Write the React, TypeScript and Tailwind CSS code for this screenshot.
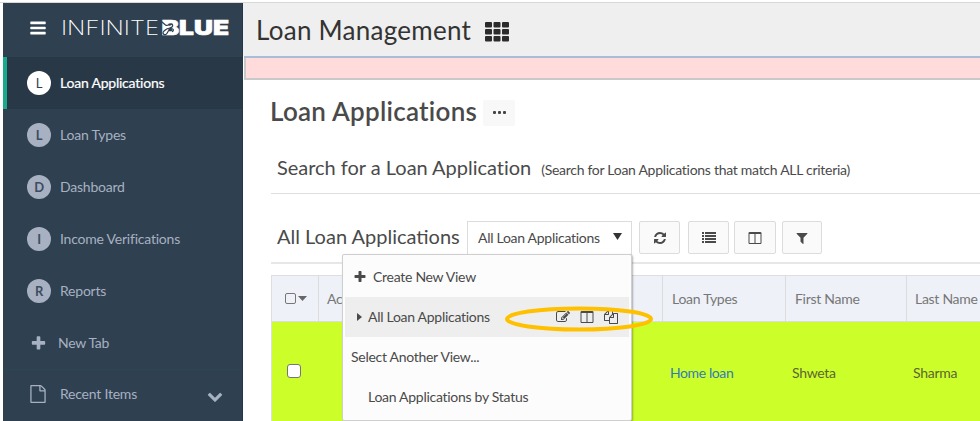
import React from "react";

const PATHS = {
  bars: "M1664 1344v128q0 26-19 45t-45 19h-1408q-26 0-45-19t-19-45v-128q0-26 19-45t45-19h1408q26 0 45 19t19 45zm0-512v128q0 26-19 45t-45 19h-1408q-26 0-45-19t-19-45v-128q0-26 19-45t45-19h1408q26 0 45 19t19 45zm0-512v128q0 26-19 45t-45 19h-1408q-26 0-45-19t-19-45v-128q0-26 19-45t45-19h1408q26 0 45 19t19 45z",
  refresh:
    "M1639 1056q0 5-1 7-64 268-268 434.5t-478 166.5q-146 0-282.5-55t-243.5-157l-129 129q-19 19-45 19t-45-19-19-45v-448q0-26 19-45t45-19h448q26 0 45 19t19 45-19 45l-137 137q71 66 161 102t187 36q134 0 250-65t186-179q11-17 53-117 8-23 30-23h192q13 0 22.5 9.5t9.5 22.5zm25-800v448q0 26-19 45t-45 19h-448q-26 0-45-19t-19-45 19-45l138-138q-148-137-349-137-134 0-250 65t-186 179q-11 17-53 117-8 23-30 23h-199q-13 0-22.5-9.5t-9.5-22.5v-7q65-268 270-434.5t480-166.5q146 0 284 55.5t245 156.5l130-129q19-19 45-19t45 19 19 45z",
  filter:
    "M1595 295q17 41-14 70l-493 493v742q0 42-39 59-13 5-25 5-27 0-45-19l-256-256q-19-19-19-45v-486l-493-493q-31-29-14-70 17-39 59-39h1280q42 0 59 39z",
  columns:
    "M224 1536h608v-1152h-640v1120q0 13 9.5 22.5t22.5 9.5zm1376-32v-1120h-640v1152h608q13 0 22.5-9.5t9.5-22.5zm128-1216v1216q0 66-47 113t-113 47h-1344q-66 0-113-47t-47-113v-1216q0-66 47-113t113-47h1344q66 0 113 47t47 113z",
  plus: "M1600 736v192q0 40-28 68t-68 28h-416v416q0 40-28 68t-68 28h-192q-40 0-68-28t-28-68v-416h-416q-40 0-68-28t-28-68v-192q0-40 28-68t68-28h416v-416q0-40 28-68t68-28h192q40 0 68 28t28 68v416h416q40 0 68 28t28 68z",
  edit: "M888 1184l116-116-152-152-116 116v56h96v96h56zm440-720q-16-16-33 1l-350 350q-17 17-1 33t33-1l350-350q17-17 1-33zm80 594v190q0 119-84.5 203.5t-203.5 84.5h-832q-119 0-203.5-84.5t-84.5-203.5v-832q0-119 84.5-203.5t203.5-84.5h832q63 0 117 25 15 7 18 23 3 17-9 29l-49 49q-14 14-32 8-23-6-45-6h-832q-66 0-113 47t-47 113v832q0 66 47 113t113 47h832q66 0 113-47t47-113v-126q0-13 9-22l64-64q15-15 35-7t20 29zm-96-738l288 288-672 672h-288v-288zm444 132l-92 92-288-288 92-92q28-28 68-28t68 28l152 152q28 28 28 68t-28 68z",
  copy: "M1696 384q40 0 68 28t28 68v1216q0 40-28 68t-68 28h-960q-40 0-68-28t-28-68v-288h-544q-40 0-68-28t-28-68v-672q0-40 20-88t48-76l408-408q28-28 76-48t88-20h416q40 0 68 28t28 68v328q68-40 128-40h416zm-544 213l-299 299h299v-299zm-640-384l-299 299h299v-299zm196 647l316-316v-416h-384v416q0 40-28 68t-68 28h-416v640h512v-256q0-40 20-88t48-76zm956 804v-1152h-384v416q0 40-28 68t-68 28h-416v640h896z",
  file: "M1596 380q28 28 48 76t20 88v1152q0 40-28 68t-68 28h-1344q-40 0-68-28t-28-68v-1600q0-40 28-68t68-28h896q40 0 88 20t76 48zm-444-244v376h376q-10-29-22-41l-313-313q-12-12-41-22zm384 1528v-1024h-416q-40 0-68-28t-28-68v-416h-768v1536h1280z",
  chevron:
    "M1683 808l-742 741q-19 19-45 19t-45-19l-742-741q-19-19-19-45.5t19-45.5l166-165q19-19 45-19t45 19l531 531 531-531q19-19 45-19t45 19l166 165q19 19 19 45.5t-19 45.5z",
};

function Icon({ name, className }: { name: keyof typeof PATHS; className: string }) {
  return (
    <svg viewBox="0 0 1792 1792" fill="currentColor" className={className}>
      <path d={PATHS[name]} />
    </svg>
  );
}

function Logo() {
  return (
    <svg width="170" height="28" viewBox="0 -4 170 28" fill="#fff" className="font-['Inter',sans-serif] tracking-normal">
      <text x="-1" y="17" fontSize="20" fontWeight="200" textLength="98" lengthAdjust="spacingAndGlyphs">
        INFINITE
      </text>
      <text x="99.500" y="17" fontSize="20" fontWeight="900" stroke="#fff" strokeWidth="0.6" textLength="67.500" lengthAdjust="spacingAndGlyphs">
        BLUE
      </text>
      <g fill="none" stroke="#2f4050" strokeWidth="1.2" strokeLinecap="round">
        <path d="M100 4l3.500 3c2 1.500 3-.5 5-1s3 1.500 1.500 3-4 1-6 2.500-4 3-2.500 4.500 3 .5 4-1.500 2-4 4-4 2.500 2 1 3" />
      </g>
    </svg>
  );
}

function NavItem({ letter, label, active }: { letter: string; label: string; active?: boolean }) {
  return (
    <div
      className={
        active
          ? "flex h-[52px] items-center border-l-4 border-[#19aa8d] bg-[#293846] pl-5 text-white"
          : "flex h-[52px] items-center pl-6 text-[#a7b1c2]"
      }
    >
      <span
        className={
          active
            ? "flex size-6 items-center justify-center rounded-full bg-white text-[13px] text-[#2f4050]"
            : "flex size-6 items-center justify-center rounded-full bg-[#a7b1c2] text-[13px] font-bold text-[#3d4d60]"
        }
      >
        {letter}
      </span>
      <span className={active ? "ml-[9px] [-webkit-text-stroke:0.2px]" : "ml-[9px]"}>{label}</span>
    </div>
  );
}

function Sidebar() {
  return (
    <aside className="h-[418px] w-[240px] shrink-0 border-r border-[#26364a] bg-[#2f4050] text-[14px] leading-5 tracking-[-0.22px]">
      <div className="flex h-[54px] items-center pl-[26px]">
        <Icon name="bars" className="mt-[-4px] size-[18px] text-white" />
        <div className="mt-[-4px] ml-[15px]">
          <Logo />
        </div>
      </div>
      <NavItem letter="L" label="Loan Applications" active />
      <NavItem letter="L" label="Loan Types" />
      <NavItem letter="D" label="Dashboard" />
      <NavItem letter="I" label="Income Verifications" />
      <NavItem letter="R" label="Reports" />
      <div className="flex h-[52px] items-center pl-[27px] text-[#a7b1c2]">
        <Icon name="plus" className="size-[17px]" />
        <span className="ml-[11px] tracking-[-0.3px]">New Tab</span>
      </div>
      <div className="flex h-[49px] items-center border-t border-[#2b4557] pl-[26px] text-[#a7b1c2]">
        <Icon name="file" className="size-[18px]" />
        <span className="mt-[-1px] ml-[13px]">Recent Items</span>
        <Icon name="chevron" className="mt-1 mr-[19px] ml-auto size-4" />
      </div>
    </aside>
  );
}

function ToolButton({ className, children }: { className: string; children: React.ReactNode }) {
  return (
    <button className={`flex h-[33px] items-center justify-center rounded-[2px] border border-[#dcdcdc] bg-[#fafafa] text-[#4a4a4a] ${className}`}>
      {children}
    </button>
  );
}

function ViewMenu() {
  return (
    <div className="absolute top-[32px] left-[-126px] z-10 h-[167px] w-[290px] rounded-[2px] border border-[#cfcfcf] bg-[#fcfcfc] px-[2px] pt-[2px] shadow-[1px_1px_2px_rgba(0,0,0,0.3)]">
      <div className="flex h-[40px] items-center pl-2">
        <Icon name="plus" className="size-[14px]" />
        <span className="ml-[6px]">Create New View</span>
      </div>
      <div className="flex h-[40px] items-center bg-[#eeeeee] pl-[12px]">
        <svg width="5" height="8" viewBox="0 0 5 8" fill="currentColor">
          <path d="M0 0l5 4-5 4z" />
        </svg>
        <span className="ml-[6px]">All Loan Applications</span>
        <div className="mr-[11px] ml-auto flex gap-[10px]">
          <Icon name="edit" className="size-[14px]" />
          <Icon name="columns" className="size-[14px]" />
          <Icon name="copy" className="size-[14px]" />
        </div>
      </div>
      <div className="flex h-[40px] items-center pl-[6px]">Select Another View...</div>
      <div className="flex h-[40px] items-center pl-[23px]">Loan Applications by Status</div>
      <svg className="absolute top-[49px] left-[160px] max-w-none" width="152" height="30" viewBox="0 0 152 30">
        <ellipse cx="76" cy="15" rx="72" ry="10.5" fill="none" stroke="#ffc000" strokeWidth="4" />
      </svg>
    </div>
  );
}

function DataTable() {
  return (
    <div className="mt-[11px] ml-[28px] w-[709px] overflow-hidden border-t border-l border-[#dedede]">
      <div className="flex h-[46px] border-b border-[#dcdcdc] bg-[#eef1f7] leading-[45px] text-[#777777]">
        <div className="flex w-[47px] shrink-0 items-center border-r border-[#dcdcdc] pl-[13px]">
          <span className="size-[11px] rounded-[2px] border border-[#777777]" />
          <svg className="ml-[2px]" width="9" height="5" fill="#666666">
            <path d="M0 0h9l-4.500 5z" />
          </svg>
        </div>
        <div className="w-[344px] shrink-0 border-r border-[#dcdcdc] pl-2">Actions</div>
        <div className="w-[123px] shrink-0 border-r border-[#dcdcdc] pl-[9px]">Loan Types</div>
        <div className="w-[121px] shrink-0 border-r border-[#dcdcdc] pl-[9px]">First Name</div>
        <div className="pl-2 whitespace-nowrap">Last Name</div>
      </div>
      <div className="flex h-[102px] items-center bg-[#ccff29] text-[#5c6534]">
        <div className="w-[391px] pl-[15px]">
          <span className="mt-[-4px] block size-[14px] rounded-[3px] border border-[#767676] bg-white" />
        </div>
        <div className="mt-[-1px] w-[123px] pl-[7px] tracking-[-0.4px] text-[#337ab7]">Home loan</div>
        <div className="mt-[-1px] w-[121px] pl-[6px]">Shweta</div>
        <div className="mt-[-1px] pl-[6px]">Sharma</div>
      </div>
    </div>
  );
}

export default function App() {
  return (
    <div className="h-[421px] w-[980px] overflow-hidden bg-white font-['Lato',sans-serif] text-[14px] leading-5 tracking-[-0.28px] text-[#4a4a4a]">
      <div className="h-[3px] border-b border-[#d8d8d8]" />
      <div className="flex pl-[3px]">
        <Sidebar />
        <main className="h-[418px] w-[737px]">
          <header className="flex h-[53px] items-center bg-[#efefef] pl-[13px] text-[#333333]">
            <h1 className="text-[26px] leading-8 tracking-[0.27px]">Loan Management</h1>
            <svg className="mt-[5px] ml-[14px]" width="25" height="20" fill="#2b2b2b">
              {[0, 7, 14].map((y) =>
                [0, 8.5, 17].map((x) => <rect key={`${x}-${y}`} x={x} y={y} width="7" height="5.500" rx="1" />),
              )}
            </svg>
          </header>
          <div className="ml-px h-[24px] border-t-2 border-[#a9bdd8]">
            <div className="h-[22px] border-b-2 border-l-2 border-[#c9c9c9] bg-[#ffdbdb]" />
          </div>
          <div className="flex h-[61px] items-center pl-[27px]">
            <h2 className="text-[26px] leading-8 font-semibold tracking-[0.26px]">Loan Applications</h2>
            <span className="mt-1 ml-[6px] flex h-[26px] w-8 items-center justify-center gap-[2px] rounded-[2px] bg-[#f8f8f8]">
              <i className="size-[3px] rounded-[1px] bg-[#444444]" />
              <i className="size-[3px] rounded-[1px] bg-[#444444]" />
              <i className="size-[3px] rounded-[1px] bg-[#444444]" />
            </span>
          </div>
          <div className="ml-[28px] flex h-[53px] items-baseline border-b border-[#dedede] pt-[14px] pl-[6px]">
            <h3 className="text-[20px] leading-6 tracking-[-0.02px]">Search for a Loan Application</h3>
            <span className="ml-[10px]">(Search for Loan Applications that match ALL criteria)</span>
          </div>
          <div className="ml-[28px] flex h-[70px] items-start border-b-2 border-[#e7e7e7] pt-[27px] pl-[6px]">
            <h3 className="mt-[3px] w-[190px] text-[20px] leading-6 tracking-normal whitespace-nowrap">All Loan Applications</h3>
            <div className="relative flex h-[34px] w-[165px] border border-[#dcdcdc] bg-white">
              <span className="mt-[6px] ml-[10px]">All Loan Applications</span>
              <svg className="mt-[11px] mr-[9px] ml-auto" width="9" height="7" fill="#333333">
                <path d="M0 0h9l-4.500 7z" />
              </svg>
              <ViewMenu />
            </div>
            <ToolButton className="ml-[7px] w-[41px]">
              <Icon name="refresh" className="size-[14px]" />
            </ToolButton>
            <ToolButton className="ml-2 w-[41px]">
              <svg width="14" height="11" fill="currentColor">
                {[0, 3, 6, 9].map((y) => (
                  <g key={y}>
                    <rect y={y} width="2" height="2" />
                    <rect x="3" y={y} width="11" height="2" />
                  </g>
                ))}
              </svg>
            </ToolButton>
            <ToolButton className="ml-[5px] w-[42px]">
              <Icon name="columns" className="size-[14px]" />
            </ToolButton>
            <ToolButton className="ml-[6px] w-[40px]">
              <Icon name="filter" className="size-[14px]" />
            </ToolButton>
          </div>
          <DataTable />
        </main>
      </div>
    </div>
  );
}
